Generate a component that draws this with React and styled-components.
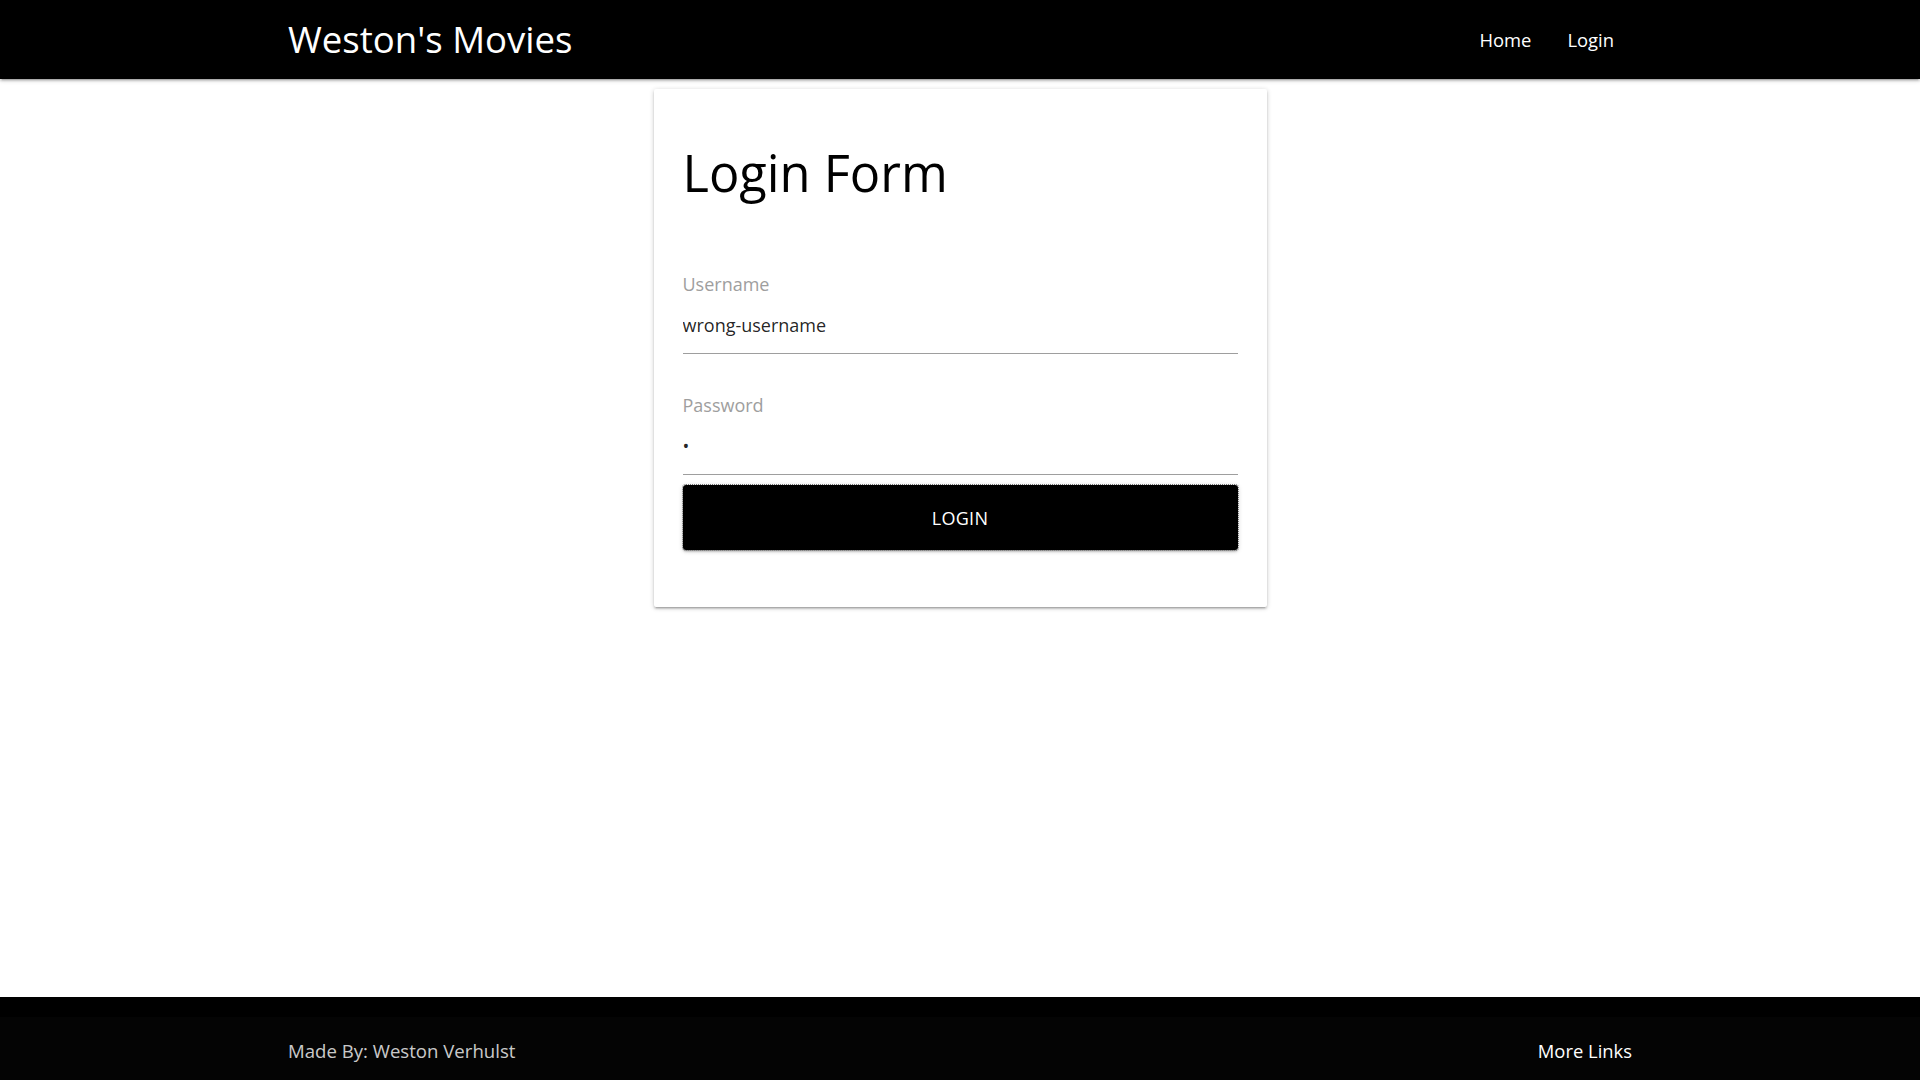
import React from "react";
import styled, { createGlobalStyle } from "styled-components";

const GlobalStyle = createGlobalStyle`
  html, body {
    margin: 0;
    padding: 0;
    background: #fff;
    font-family: "Open Sans", "Noto Sans", Arial, sans-serif;
  }
  * {
    box-sizing: border-box;
  }
`;

const App = () => {
  return (
    <React.Fragment>
      <GlobalStyle />
      <Page>
        <NavBar>
          <NavInner>
            <Brand href="#">Weston's Movies</Brand>
            <NavLinks>
              <NavLink href="#">Home</NavLink>
              <NavLink href="#">Login</NavLink>
            </NavLinks>
          </NavInner>
        </NavBar>

        <Main>
          <Card>
            <Heading>Login Form</Heading>
            <form onSubmit={(e) => e.preventDefault()}>
              <Field>
                <Label htmlFor="username">Username</Label>
                <Input id="username" type="text" defaultValue="wrong-username" />
              </Field>
              <Field second>
                <Label htmlFor="password">Password</Label>
                <Input id="password" type="password" defaultValue="a" />
              </Field>
              <LoginBtn type="submit">LOGIN</LoginBtn>
            </form>
          </Card>
        </Main>

        <Footer>
          <Copyright>
            <FooterInner>
              <MadeBy>Made By: Weston Verhulst</MadeBy>
              <MoreLinks href="#">More Links</MoreLinks>
            </FooterInner>
          </Copyright>
        </Footer>
      </Page>
    </React.Fragment>
  );
};

export default App;

const Page = styled.div`
  display: flex;
  flex-direction: column;
  min-height: 100vh;
`;

const NavBar = styled.nav`
  height: 79px;
  background-color: #000;
  box-shadow: 0 2px 2px 0 rgba(0, 0, 0, 0.14), 0 3px 1px -2px rgba(0, 0, 0, 0.12),
    0 1px 5px 0 rgba(0, 0, 0, 0.2);
  position: relative;
  z-index: 2;
`;

const NavInner = styled.div`
  width: 70%;
  height: 100%;
  margin: 0 auto;
  display: flex;
  align-items: center;
  justify-content: space-between;
`;

const Brand = styled.a`
  color: #fff;
  text-decoration: none;
  font-size: 36.6px;
  line-height: 79px;
`;

const NavLinks = styled.div`
  display: flex;
  height: 100%;
`;

const NavLink = styled.a`
  display: flex;
  align-items: center;
  padding: 0 18px;
  color: #fff;
  text-decoration: none;
  font-size: 18.4px;
`;

const Main = styled.main`
  flex: 1;
`;

const Card = styled.div`
  width: 613px;
  margin: 10px auto 0;
  padding: 29px;
  background: #fff;
  border-radius: 2px;
  box-shadow: 0 2px 2px 0 rgba(0, 0, 0, 0.14), 0 3px 1px -2px rgba(0, 0, 0, 0.12),
    0 1px 5px 0 rgba(0, 0, 0, 0.2);
`;

const Heading = styled.h3`
  margin: 25px 0 69px;
  font-size: 50.6px;
  line-height: 60px;
  font-weight: 400;
  color: #000;
`;

const Field = styled.div`
  display: flex;
  flex-direction: column;
  margin-top: ${(props) => (props.second ? "39px" : "0")};
`;

const Label = styled.label`
  font-size: 18px;
  line-height: 24px;
  color: #9e9e9e;
`;

const Input = styled.input`
  height: 58px;
  padding: 0;
  border: none;
  border-bottom: 1px solid #9e9e9e;
  outline: none;
  background: transparent;
  font-family: inherit;
  font-size: 18px;
  color: rgba(0, 0, 0, 0.87);
`;

const LoginBtn = styled.button`
  display: block;
  width: 100%;
  height: 65px;
  margin: 10px 0 28px;
  border: none;
  border-radius: 3px;
  background-color: #000;
  color: #fff;
  font-family: inherit;
  font-size: 18px;
  letter-spacing: 0.3px;
  outline: 1px dotted #777;
  box-shadow: 0 2px 2px 0 rgba(0, 0, 0, 0.14), 0 3px 1px -2px rgba(0, 0, 0, 0.12),
    0 1px 5px 0 rgba(0, 0, 0, 0.2);
  cursor: pointer;
`;

const Footer = styled.footer`
  background-color: #000;
  padding-top: 20px;
`;

const Copyright = styled.div`
  height: 63px;
  padding-top: 4px;
  background-color: rgba(51, 51, 51, 0.08);
  display: flex;
  align-items: center;
`;

const FooterInner = styled.div`
  width: 70%;
  margin: 0 auto;
  display: flex;
  justify-content: space-between;
  align-items: center;
`;

const MadeBy = styled.span`
  color: rgba(255, 255, 255, 0.8);
  font-size: 18.6px;
`;

const MoreLinks = styled.a`
  color: #fff;
  text-decoration: none;
  font-size: 18.4px;
`;
